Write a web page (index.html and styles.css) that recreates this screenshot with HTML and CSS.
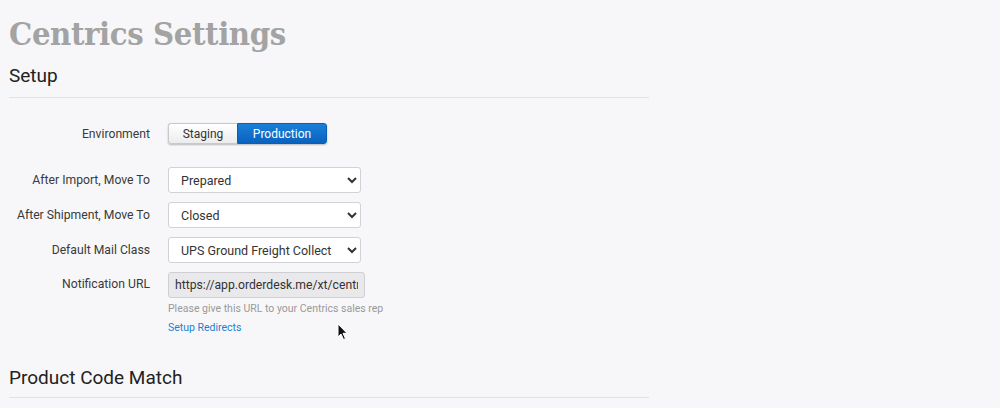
FILE: index.html
```html
<!DOCTYPE html>
<html lang="en">
<head>
    <meta charset="UTF-8">
    <title>Centrics Settings</title>
    <link rel="stylesheet" href="styles.css">
</head>
<body>
    <div class="page">
        <h1 class="page-title">Centrics Settings</h1>

        <h2 class="section-title">Setup</h2>

        <div class="settings">
            <div class="row row-env">
                <label class="row-label">Environment</label>
                <div class="toggle">
                    <button class="toggle-btn">Staging</button>
                    <button class="toggle-btn active">Production</button>
                </div>
            </div>

            <div class="row">
                <label class="row-label" for="afterImport">After Import, Move To</label>
                <select id="afterImport" class="field">
                    <option>Prepared</option>
                </select>
            </div>

            <div class="row">
                <label class="row-label" for="afterShip">After Shipment, Move To</label>
                <select id="afterShip" class="field">
                    <option>Closed</option>
                </select>
            </div>

            <div class="row">
                <label class="row-label" for="mailClass">Default Mail Class</label>
                <select id="mailClass" class="field">
                    <option>UPS Ground Freight Collect</option>
                </select>
            </div>

            <div class="row row-url">
                <label class="row-label" for="notifyUrl">Notification URL</label>
                <div class="url-block">
                    <input id="notifyUrl" class="field field-url" type="text" value="https://app.orderdesk.me/xt/centrics/notify" readonly>
                    <p class="help">Please give this URL to your Centrics sales rep</p>
                    <a class="link" href="#">Setup Redirects</a>
                </div>
            </div>
        </div>

        <h2 class="section-title section-next">Product Code Match</h2>
    </div>

    <!-- mouse pointer from the capture -->
    <svg class="cursor" width="12" height="18" viewBox="0 0 12 18">
        <path d="M1 1 L1 14 L4 11 L6.5 16.5 L8.5 15.6 L6 10.3 L10 10.3 Z" fill="#111" stroke="#fff" stroke-width="1"/>
    </svg>
</body>
</html>
```

FILE: styles.css
```css
body {
    margin: 0;
    background: #f7f7f9;
    font-family: Roboto, "Liberation Sans", Arial, sans-serif;
    color: #333;
}
.page {
    padding: 0 0 0 9px;
    width: 640px;
}
.page-title {
    margin: 0;
    padding-top: 13px;
    font-family: "DejaVu Serif", "Liberation Serif", serif;
    font-stretch: condensed;
    font-size: 32.5px;
    line-height: 42px;
    font-weight: bold;
    color: #a3a3a3;
    letter-spacing: -0.4px;
}
.section-title {
    margin: 8px 0 0;
    padding-bottom: 8px;
    font-size: 19px;
    line-height: 26px;
    font-weight: 400;
    color: #222;
    border-bottom: 1px solid #e2e2e6;
}
.section-next {
    margin-top: 31px;
    padding-bottom: 6px;
}
.settings {
    display: flex;
    flex-direction: column;
    gap: 9px;
    padding-top: 25px;
}
.row {
    display: grid;
    grid-template-columns: 141px 193px;
    column-gap: 18px;
    align-items: center;
    font-size: 12.2px;
}
.row-env {
    margin-bottom: 14px;
}
.row-url {
    align-items: start;
    grid-template-columns: 141px 240px;
}
.row-url .row-label {
    padding-top: 5px;
}
.row-label {
    text-align: right;
    color: #3a3a3a;
}
.toggle {
    display: flex;
    height: 21px;
    width: 159px;
    border-radius: 3px;
    box-shadow: 0 1px 2px rgba(0, 0, 0, 0.25);
}
.toggle-btn {
    border: 1px solid #c9c9c9;
    background: linear-gradient(#ffffff, #ececec);
    font-family: inherit;
    font-size: 12px;
    color: #333;
    padding: 0;
    cursor: pointer;
}
.toggle-btn:first-child {
    width: 69px;
    border-radius: 3px 0 0 3px;
    border-right: none;
}
.toggle-btn.active {
    width: 90px;
    color: #fff;
    background: linear-gradient(#1a7fd9, #0963be);
    border-color: #0a5fb5;
    border-radius: 0 3px 3px 0;
}
.field {
    height: 26px;
    width: 193px;
    box-sizing: border-box;
    border: 1px solid #d2d2d6;
    border-radius: 3px;
    background: #fff;
    font-family: inherit;
    font-size: 12.5px;
    color: #333;
    padding: 0 8px;
}
.field-url {
    width: 197px;
    background: #e9e9ec;
    border-color: #cfcfd3;
    font-size: 12.2px;
    padding: 0 6px;
}
.help {
    margin: 4px 0 0;
    font-size: 10.5px;
    color: #999;
    white-space: nowrap;
}
.link {
    display: block;
    margin-top: 6px;
    font-size: 10.5px;
    color: #1d7fd0;
    text-decoration: none;
}
.cursor {
    position: absolute;
    left: 337px;
    top: 323px;
}
```
